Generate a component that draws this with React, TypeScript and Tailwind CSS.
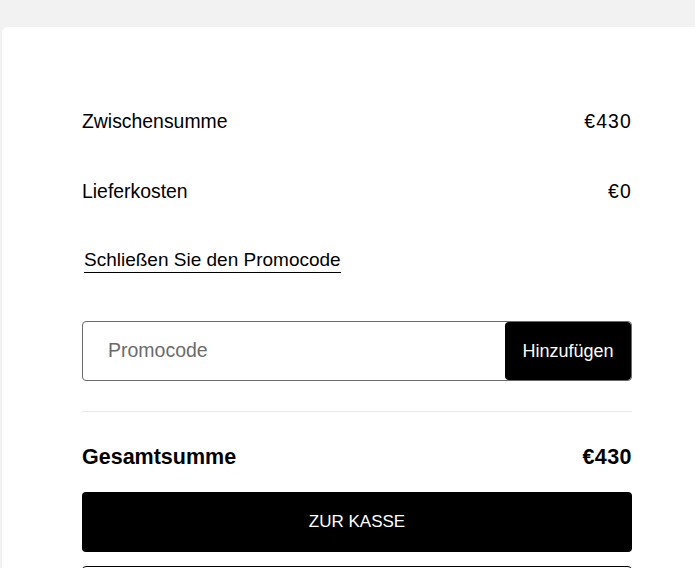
import React from "react";

export default function App() {
  return (
    <div className="min-h-[568px] w-[695px] overflow-hidden bg-[#f2f2f2] pt-[27px] pl-[2px]" style={{ fontFamily: '"Liberation Sans", Arial, sans-serif' }}>
      <div className="h-[541px] w-[720px] overflow-hidden rounded-tl-[6px] bg-white pt-[80px] pl-[80px] text-black">
        <div className="w-[550px]">
          <div className="flex h-[30px] items-center justify-between text-[19.4px]">
            <span>Zwischensumme</span>
            <span className="tracking-[0.06em]">€430</span>
          </div>
          <div className="mt-[40px] flex h-[30px] items-center justify-between text-[19.4px]">
            <span>Lieferkosten</span>
            <span className="tracking-[0.06em]">€0</span>
          </div>
          <div className="mt-[40px] flex">
            <span className="ml-[2px] border-b border-black text-[19px] leading-[25px]">Schließen Sie den Promocode</span>
          </div>
          <div className="mt-[48px] flex h-[60px] items-stretch rounded-[4px] border border-[#6b6b6b]">
            <div className="flex flex-1 items-center pl-[25px] text-[19.5px] text-[#6b6b6b]">Promocode</div>
            <button className="w-[126px] rounded-[4px] bg-black text-[18px] text-white">Hinzufügen</button>
          </div>
          <div className="mt-[30px] h-px bg-[#e8e8e8]" />
          <div className="mt-[31px] flex h-[28px] items-center justify-between text-[21.5px] font-bold">
            <span>Gesamtsumme</span>
            <span className="tracking-[0.02em]">€430</span>
          </div>
          <button className="mt-[21px] flex h-[60px] w-full items-center justify-center rounded-[4px] bg-black text-[17px] text-white">ZUR KASSE</button>
          <div className="mt-[14px] h-[60px] rounded-[4px] border border-black" />
        </div>
      </div>
    </div>
  );
}
